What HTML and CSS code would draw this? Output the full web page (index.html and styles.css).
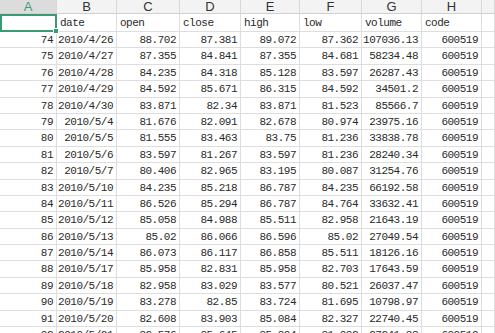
FILE: index.html
```html
<!DOCTYPE html>
<html>
<head>
<meta charset="utf-8">
<link rel="stylesheet" href="styles.css">
</head>
<body>
<div class="sheet">
  <div class="hd hd-sel">A</div><div class="hd">B</div><div class="hd">C</div><div class="hd">D</div><div class="hd">E</div><div class="hd">F</div><div class="hd">G</div><div class="hd">H</div><div class="hd"></div>

  <div class="c first sel"></div><div class="c first t">date</div><div class="c first t">open</div><div class="c first t">close</div><div class="c first t">high</div><div class="c first t">low</div><div class="c first t">volume</div><div class="c first t">code</div><div class="c first"></div>

  <div class="c">74</div><div class="c">2010/4/26</div><div class="c">88.702</div><div class="c">87.381</div><div class="c">89.072</div><div class="c">87.362</div><div class="c">107036.13</div><div class="c">600519</div><div class="c"></div>
  <div class="c">75</div><div class="c">2010/4/27</div><div class="c">87.355</div><div class="c">84.841</div><div class="c">87.355</div><div class="c">84.681</div><div class="c">58234.48</div><div class="c">600519</div><div class="c"></div>
  <div class="c">76</div><div class="c">2010/4/28</div><div class="c">84.235</div><div class="c">84.318</div><div class="c">85.128</div><div class="c">83.597</div><div class="c">26287.43</div><div class="c">600519</div><div class="c"></div>
  <div class="c">77</div><div class="c">2010/4/29</div><div class="c">84.592</div><div class="c">85.671</div><div class="c">86.315</div><div class="c">84.592</div><div class="c">34501.2</div><div class="c">600519</div><div class="c"></div>
  <div class="c">78</div><div class="c">2010/4/30</div><div class="c">83.871</div><div class="c">82.34</div><div class="c">83.871</div><div class="c">81.523</div><div class="c">85566.7</div><div class="c">600519</div><div class="c"></div>
  <div class="c">79</div><div class="c">2010/5/4</div><div class="c">81.676</div><div class="c">82.091</div><div class="c">82.678</div><div class="c">80.974</div><div class="c">23975.16</div><div class="c">600519</div><div class="c"></div>
  <div class="c">80</div><div class="c">2010/5/5</div><div class="c">81.555</div><div class="c">83.463</div><div class="c">83.75</div><div class="c">81.236</div><div class="c">33838.78</div><div class="c">600519</div><div class="c"></div>
  <div class="c">81</div><div class="c">2010/5/6</div><div class="c">83.597</div><div class="c">81.267</div><div class="c">83.597</div><div class="c">81.236</div><div class="c">28240.34</div><div class="c">600519</div><div class="c"></div>
  <div class="c">82</div><div class="c">2010/5/7</div><div class="c">80.406</div><div class="c">82.965</div><div class="c">83.195</div><div class="c">80.087</div><div class="c">31254.76</div><div class="c">600519</div><div class="c"></div>
  <div class="c">83</div><div class="c">2010/5/10</div><div class="c">84.235</div><div class="c">85.218</div><div class="c">86.787</div><div class="c">84.235</div><div class="c">66192.58</div><div class="c">600519</div><div class="c"></div>
  <div class="c">84</div><div class="c">2010/5/11</div><div class="c">86.526</div><div class="c">85.294</div><div class="c">86.787</div><div class="c">84.764</div><div class="c">33632.41</div><div class="c">600519</div><div class="c"></div>
  <div class="c">85</div><div class="c">2010/5/12</div><div class="c">85.058</div><div class="c">84.988</div><div class="c">85.511</div><div class="c">82.958</div><div class="c">21643.19</div><div class="c">600519</div><div class="c"></div>
  <div class="c">86</div><div class="c">2010/5/13</div><div class="c">85.02</div><div class="c">86.066</div><div class="c">86.596</div><div class="c">85.02</div><div class="c">27049.54</div><div class="c">600519</div><div class="c"></div>
  <div class="c">87</div><div class="c">2010/5/14</div><div class="c">86.073</div><div class="c">86.117</div><div class="c">86.858</div><div class="c">85.511</div><div class="c">18126.16</div><div class="c">600519</div><div class="c"></div>
  <div class="c">88</div><div class="c">2010/5/17</div><div class="c">85.958</div><div class="c">82.831</div><div class="c">85.958</div><div class="c">82.703</div><div class="c">17643.59</div><div class="c">600519</div><div class="c"></div>
  <div class="c">89</div><div class="c">2010/5/18</div><div class="c">82.958</div><div class="c">83.029</div><div class="c">83.577</div><div class="c">80.521</div><div class="c">26037.47</div><div class="c">600519</div><div class="c"></div>
  <div class="c">90</div><div class="c">2010/5/19</div><div class="c">83.278</div><div class="c">82.85</div><div class="c">83.724</div><div class="c">81.695</div><div class="c">10798.97</div><div class="c">600519</div><div class="c"></div>
  <div class="c">91</div><div class="c">2010/5/20</div><div class="c">82.608</div><div class="c">83.903</div><div class="c">85.084</div><div class="c">82.327</div><div class="c">22740.45</div><div class="c">600519</div><div class="c"></div>
  <div class="c">92</div><div class="c">2010/5/21</div><div class="c">82.576</div><div class="c">85.645</div><div class="c">85.894</div><div class="c">81.982</div><div class="c">27241.38</div><div class="c">600519</div><div class="c"></div>
</div>
</body>
</html>
```
FILE: styles.css
```css
html, body {
  margin: 0;
  padding: 0;
  background: #ffffff;
  overflow: hidden;
}

.sheet {
  display: grid;
  grid-template-columns: 57px 60px 63px 61px 59px 62px 60px 60px 1fr;
  grid-template-rows: 14px 18px repeat(19, 16.4px);
  width: 495px;
  height: 333px;
  overflow: hidden;
}

.hd {
  box-sizing: border-box;
  background: #f3f3f3;
  border-right: 1px solid #d8d8d8;
  border-bottom: 1px solid #d0d0d0;
  font-family: "Liberation Sans", Arial, sans-serif;
  font-size: 13px;
  line-height: 13px;
  color: #333333;
  text-align: center;
}

.hd-sel {
  background: #dcdcdc;
  color: #3f9e78;
}

.c {
  box-sizing: border-box;
  border-right: 1px solid #dedede;
  border-bottom: 1px solid #dedede;
  font-family: "Liberation Mono", "DejaVu Sans Mono", monospace;
  font-size: 11px;
  letter-spacing: -0.5px;
  line-height: 16px;
  color: #2a2a2a;
  text-align: right;
  padding-right: 3px;
  white-space: nowrap;
  overflow: hidden;
}

.first {
  line-height: 18px;
}

.t {
  text-align: left;
  padding-left: 3px;
  padding-right: 0;
}

.sel {
  position: relative;
  overflow: visible;
  border: 2px solid #3a9a72;
}

.sel::after {
  content: "";
  position: absolute;
  right: -4px;
  bottom: -4px;
  width: 4px;
  height: 4px;
  background: #3a9a72;
  border: 1px solid #ffffff;
}
```
